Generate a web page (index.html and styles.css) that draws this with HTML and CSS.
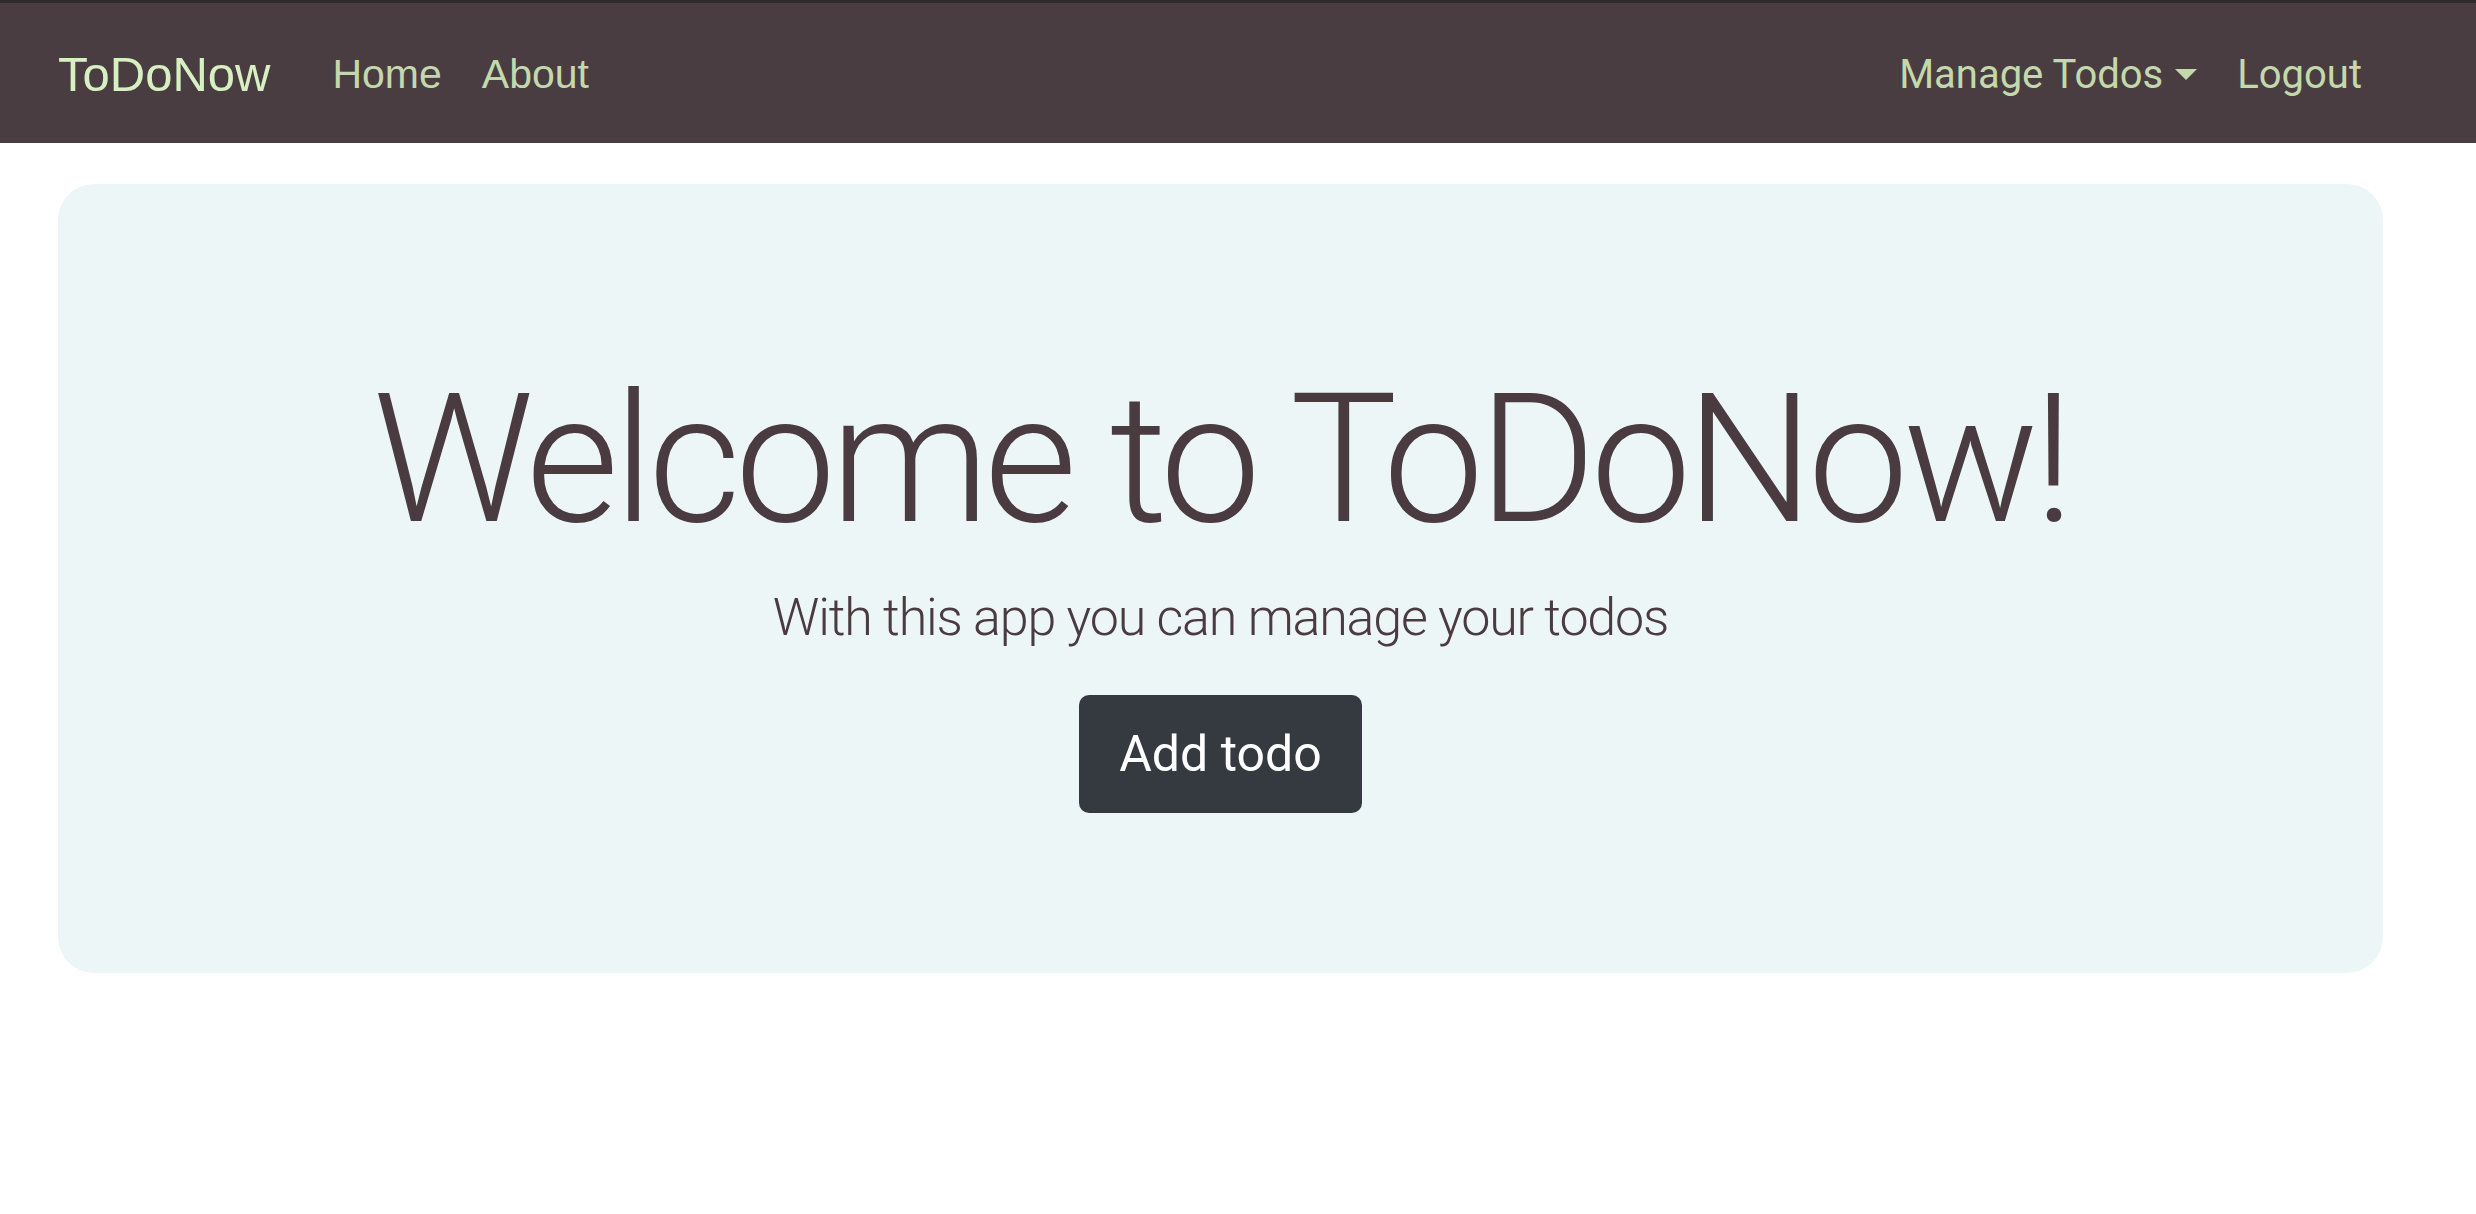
FILE: index.html
```html
<!DOCTYPE html>
<html lang="en">
<head>
<meta charset="utf-8">
<title>ToDoNow</title>
<link rel="stylesheet" href="styles.css">
</head>
<body>
<div class="topline"></div>
<nav class="navbar">
  <div class="nav-left">
    <a class="brand" href="#">ToDoNow</a>
    <a class="nav-link" href="#">Home</a>
    <a class="nav-link" href="#">About</a>
  </div>
  <div class="nav-right">
    <a class="nav-link alt dropdown" href="#">Manage Todos<span class="caret"></span></a>
    <a class="nav-link alt" href="#">Logout</a>
  </div>
</nav>
<main class="main">
  <section class="jumbotron">
    <h1 class="display">Welcome to ToDoNow!</h1>
    <p class="lead">With this app you can manage your todos</p>
    <a class="btn" href="#">Add todo</a>
  </section>
</main>
</body>
</html>
```

FILE: styles.css
```css
html, body {
  margin: 0;
  padding: 0;
  background: #ffffff;
}
body {
  font-family: "Liberation Sans", Arial, sans-serif;
}
a {
  text-decoration: none;
}
.topline {
  height: 3px;
  background: #2f2b2d;
}
.navbar {
  height: 140px;
  background: #4a3d42;
  display: flex;
  align-items: center;
  justify-content: space-between;
  padding: 3px 94px 0 58px;
  box-sizing: border-box;
}
.nav-left, .nav-right {
  display: flex;
  align-items: center;
}
.brand {
  font-family: "Liberation Sans", Arial, sans-serif;
  font-size: 49px;
  color: #d6f0c2;
  margin-right: 42px;
  line-height: 1;
}
.nav-link {
  font-family: "Liberation Sans", Arial, sans-serif;
  font-size: 41px;
  color: #c3d9ab;
  padding: 0 20px;
  line-height: 1;
}
.nav-link.alt {
  font-family: Roboto, "Liberation Sans", sans-serif;
  font-size: 40px;
}
.dropdown {
  display: flex;
  align-items: center;
}
.caret {
  display: inline-block;
  width: 0;
  height: 0;
  margin-left: 12px;
  border-left: 11px solid transparent;
  border-right: 11px solid transparent;
  border-top: 11px solid #c3d9ab;
}
.main {
  padding: 41px 93px 0 58px;
}
.jumbotron {
  background: #ecf6f7;
  border-radius: 36px;
  padding: 186px 40px 160px;
  display: flex;
  flex-direction: column;
  align-items: center;
  color: #4a3b40;
}
.display {
  margin: 0;
  font-family: Roboto, "Liberation Sans", sans-serif;
  font-weight: 300;
  font-size: 180px;
  line-height: 1;
  letter-spacing: -5.7px;
}
.lead {
  margin: 42px 0 0;
  font-family: Roboto, "Liberation Sans", sans-serif;
  font-weight: 300;
  font-size: 52px;
  line-height: 1;
  letter-spacing: -1.2px;
}
.btn {
  margin-top: 51px;
  width: 283px;
  height: 118px;
  box-sizing: border-box;
  background: #343a40;
  border-radius: 10px;
  color: #ffffff;
  font-family: Roboto, "Liberation Sans", sans-serif;
  font-size: 50px;
  display: flex;
  align-items: center;
  justify-content: center;
}
```
